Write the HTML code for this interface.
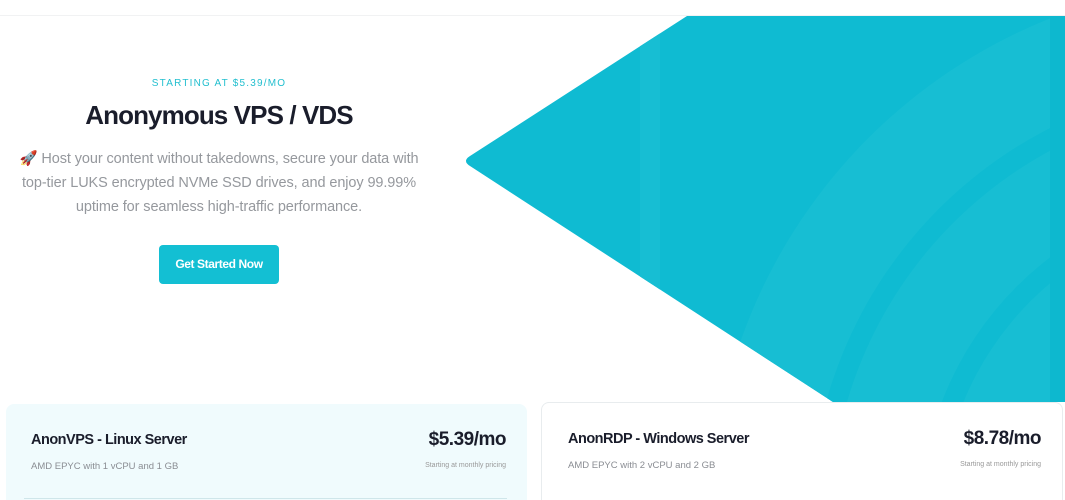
<!DOCTYPE html>
<html><head><meta charset="utf-8"><style>
*{margin:0;padding:0;box-sizing:border-box}
html,body{width:1065px;height:500px;overflow:hidden}
body{background:#fff;font-family:"Liberation Sans",sans-serif;position:relative}
.topline{position:absolute;left:0;top:15px;width:1065px;height:1px;background:#f1f2f3}
.kick{position:absolute;top:78px;left:0;width:438px;text-align:center;font-size:10px;letter-spacing:1.2px;color:#22bfcf}
h1{position:absolute;top:100px;left:0;width:438px;text-align:center;font-size:26px;font-weight:bold;color:#1a1d2b;letter-spacing:-0.9px}
p.d{position:absolute;top:147px;left:0;width:438px;text-align:center;font-size:14.5px;line-height:24px;color:#95989d;letter-spacing:-0.1px;white-space:nowrap}
.btn{position:absolute;left:159px;top:245px;width:120px;height:39px;background:#13bfd3;border-radius:4px;color:#fff;font-size:12px;font-weight:bold;letter-spacing:-0.4px;text-align:center;line-height:39px}
.card{position:absolute;border-radius:8px 8px 0 0}
.c1{left:6px;top:404px;width:521px;height:96px;background:#f0fbfd}
.c2{left:541px;top:402px;width:522px;height:98px;background:#fff;border:1px solid #e8ecee;border-bottom:none}
.t{position:absolute;top:28px;font-size:14.5px;font-weight:bold;color:#1a1d2b;letter-spacing:-0.5px}
.s{position:absolute;top:57px;font-size:9.5px;color:#8a8d93}
.pr{position:absolute;top:25px;right:21px;font-size:19px;font-weight:bold;color:#1a1d2b;letter-spacing:-0.5px}
.sp{position:absolute;top:58px;right:21px;font-size:7px;color:#999}
</style></head><body>
<div class="topline"></div>
<svg style="position:absolute;left:0;top:0" width="1065" height="500">
<defs><clipPath id="cp"><path d="M687 16 L1065 16 L1065 402 L833 402 L470 166 Q462 161 470 156 Z"/></clipPath></defs>
<g clip-path="url(#cp)">
<rect x="0" y="0" width="1065" height="500" fill="#0fbbd2"/>
<circle cx="1250" cy="520" r="540" fill="#17bed3"/>
<circle cx="1250" cy="520" r="440" fill="#0fbbd2"/>
<circle cx="1250" cy="520" r="420" fill="#17bed3"/>
<circle cx="1250" cy="520" r="330" fill="#0fbbd2"/>
<circle cx="1250" cy="520" r="310" fill="#17bed3"/>
<circle cx="1250" cy="520" r="220" fill="#0fbbd2"/>
<circle cx="1250" cy="520" r="200" fill="#17bed3"/>
<rect x="640" y="0" width="20" height="500" fill="#17bed3"/>
<rect x="1050" y="0" width="20" height="500" fill="#0db8cf"/>
</g>
</svg>
<div class="kick">STARTING AT $5.39/MO</div>
<h1>Anonymous VPS / VDS</h1>
<p class="d">🚀 Host your content without takedowns, secure your data with<br>top-tier LUKS encrypted NVMe SSD drives, and enjoy 99.99%<br>uptime for seamless high-traffic performance.</p>
<div class="btn">Get Started Now</div>
<div class="card c1"><div class="t" style="left:25px">AnonVPS - Linux Server</div><div class="s" style="left:25px">AMD EPYC with 1 vCPU and 1 GB</div><div class="pr">$5.39/mo</div><div class="sp">Starting at monthly pricing</div>
<div style="position:absolute;left:18px;top:94px;width:483px;height:1px;background:#cfe6ea"></div></div>
<div class="card c2"><div class="t" style="left:26px">AnonRDP - Windows Server</div><div class="s" style="left:26px">AMD EPYC with 2 vCPU and 2 GB</div><div class="pr">$8.78/mo</div><div class="sp">Starting at monthly pricing</div></div>
</body></html>
